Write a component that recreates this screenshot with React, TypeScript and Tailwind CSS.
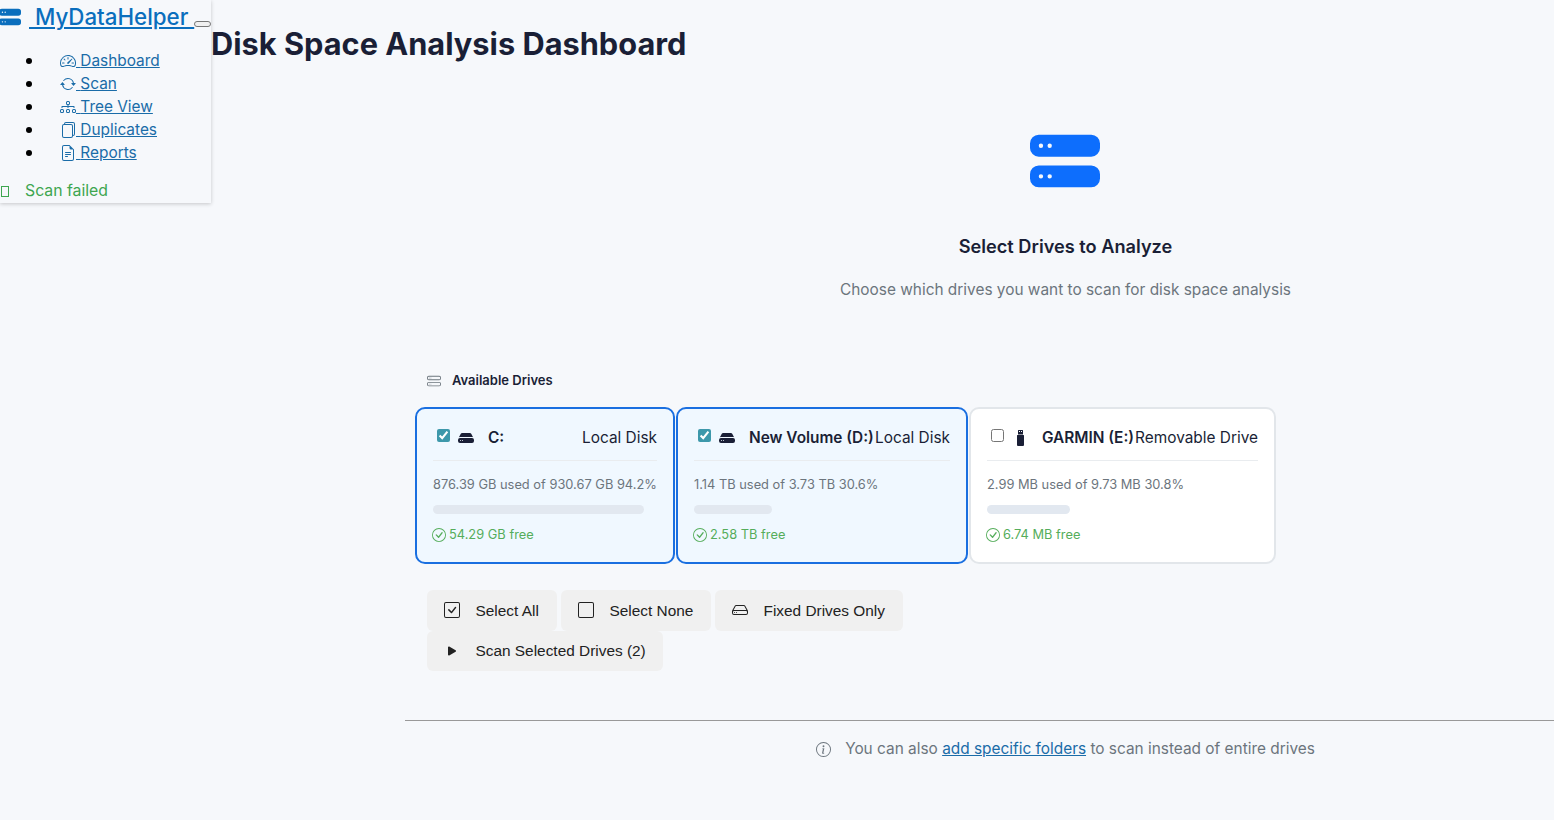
import React from 'react';
import {
  BsSpeedometer2,
  BsArrowRepeat,
  BsDiagram3,
  BsFiles,
  BsFileEarmarkText,
  BsHddStackFill,
  BsHddStack,
  BsHddFill,
  BsUsbDriveFill,
  BsCheckCircle,
  BsCheckSquare,
  BsSquare,
  BsHdd,
  BsPlayFill,
  BsInfoCircle,
} from 'react-icons/bs';

const navItems = [
  { label: 'Dashboard', icon: BsSpeedometer2 },
  { label: 'Scan', icon: BsArrowRepeat },
  { label: 'Tree View', icon: BsDiagram3 },
  { label: 'Duplicates', icon: BsFiles },
  { label: 'Reports', icon: BsFileEarmarkText },
];

const drives = [
  { name: 'C:', type: 'Local Disk', usage: '876.39 GB used of 930.67 GB 94.2%', percent: 94.2, free: '54.29 GB free', selected: true, icon: BsHddFill, width: 'w-[260px]' },
  { name: 'New Volume (D:)', type: 'Local Disk', usage: '1.14 TB used of 3.73 TB 30.6%', percent: 30.6, free: '2.58 TB free', selected: true, icon: BsHddFill, width: 'w-[292px]' },
  { name: 'GARMIN (E:)', type: 'Removable Drive', usage: '2.99 MB used of 9.73 MB 30.8%', percent: 30.8, free: '6.74 MB free', selected: false, icon: BsUsbDriveFill, width: 'w-[307px]' },
];

function Sidebar() {
  return (
    <aside className="w-[211px] h-[203px] shrink-0 bg-[#f6f8fb] shadow-[0_1px_4px_rgba(0,0,0,0.2)] overflow-hidden">
      <div className="flex items-start h-[40px]">
        <a href="#" className="flex items-center text-[22.3px] leading-[33px] font-medium text-[#0a6ebd] whitespace-nowrap">
          <BsHddStackFill className="w-[22px] h-[22px] -ml-px shrink-0" />
          <span className="ml-[8px] underline whitespace-pre"> MyDataHelper </span>
        </a>
        <button className="w-[17px] h-[6px] mt-[21px] border border-[#777] rounded-[3px] bg-[#f0f0f0] shrink-0" />
      </div>
      <ul className="mt-[9px]">
        {navItems.map(({ label, icon: Icon }) => (
          <li key={label} className="flex items-center h-[23px]">
            <span className="w-[6px] h-[6px] ml-[26px] rounded-full bg-black shrink-0" />
            <a href="#" className="flex items-center ml-[28px] text-[15.4px] text-[#1a6ca8] underline whitespace-pre">
              <Icon className="w-[16px] h-[16px] shrink-0" />
              <span> {label}</span>
            </a>
          </li>
        ))}
      </ul>
      <div className="flex items-center mt-[15px] h-[24px] text-[15.8px] text-[#3ea650]">
        <span className="w-[8px] h-[11px] ml-[1px] border border-[#3ea650]" />
        <span className="ml-[16px]">Scan failed</span>
      </div>
    </aside>
  );
}

function DriveCard({ drive }: { drive: (typeof drives)[number] }) {
  const Icon = drive.icon;
  return (
    <div
      className={`${drive.width} h-[157px] shrink-0 rounded-[10px] border-2 p-[16px] ${
        drive.selected ? 'border-[#1a6fe0] bg-[#f0f8ff]' : 'border-[#e2e6ea] bg-white'
      }`}
    >
      <div className="flex items-center justify-between h-[36px] border-b border-[#e9ecef] pb-[9px]">
        <div className="flex items-center">
          <input
            type="checkbox"
            checked={drive.selected}
            readOnly
            className="w-[13px] h-[13px] ml-[4px] mr-[8px] -mt-[5px] accent-[#3d98ab]"
          />
          <Icon className="w-[16px] h-[16px] mr-[14px] text-[#1a1f36]" />
          <span className="text-[15.4px] font-semibold text-[#1a1f36] whitespace-nowrap">{drive.name}</span>
        </div>
        <span className="text-[15.4px] text-[#1a1f36] whitespace-nowrap">{drive.type}</span>
      </div>
      <div className="mt-[14px] text-[12.85px] leading-[20px] text-[#6c757d] whitespace-nowrap">{drive.usage}</div>
      <div className="h-[9px] mt-[10px] rounded-full bg-[#e2e8f0]" style={{ width: `${drive.percent}%` }} />
      <div className="flex items-center mt-[11px] text-[12.85px] leading-[20px] text-[#55ad5b]">
        <BsCheckCircle className="w-[14px] h-[14px] -ml-px mr-[3px]" />
        {drive.free}
      </div>
    </div>
  );
}

function ActionButton({ icon, label, width }: { icon: React.ReactNode; label: string; width: string }) {
  return (
    <button className={`${width} h-[40.5px] flex items-center pl-[16.5px] rounded-[6px] bg-[#f0f0f0] text-[15.4px] text-[#222] font-['Liberation_Sans',sans-serif] whitespace-nowrap`}>
      <span className="w-[32px] flex items-center shrink-0">{icon}</span>
      {label}
    </button>
  );
}

export default function App() {
  return (
    <div className="flex h-screen overflow-hidden bg-[#f6f8fb] font-['Inter',sans-serif] text-[#1a1f36]">
      <Sidebar />
      <main className="flex-1 min-w-0">
        <h1 className="pt-[24px] text-[30.75px] leading-[40px] font-bold whitespace-nowrap">
          Disk Space Analysis Dashboard
        </h1>

        {/* Hero */}
        <div className="pl-[366px] flex flex-col items-center mt-[62px]">
          <BsHddStackFill className="w-[70px] h-[70px] -ml-[2px] text-[#0d6efd]" />
          <h2 className="mt-[36px] text-[18.2px] leading-[28px] font-semibold">Select Drives to Analyze</h2>
          <p className="mt-[16px] text-[15.4px] leading-[28px] text-[#6c757d]">
            Choose which drives you want to scan for disk space analysis
          </p>
        </div>

        {/* Drive list */}
        <div className="pl-[204px] mt-[67px]">
          <div className="flex items-center pl-[12px] h-[20px] text-[13px] font-semibold">
            <BsHddStack className="w-[14px] h-[14px] mr-[11px] text-[#6c757d]" />
            Available Drives
          </div>
          <div className="flex gap-[1px] mt-[16px]">
            {drives.map((drive) => (
              <DriveCard key={drive.name} drive={drive} />
            ))}
          </div>
          <div className="pl-[12px] mt-[26px]">
            <div className="flex gap-[4.5px]">
              <ActionButton icon={<BsCheckSquare className="w-[16px] h-[16px]" />} label="Select All" width="w-[129.5px]" />
              <ActionButton icon={<BsSquare className="w-[16px] h-[16px]" />} label="Select None" width="w-[149.5px]" />
              <ActionButton icon={<BsHdd className="w-[16px] h-[16px]" />} label="Fixed Drives Only" width="w-[188px]" />
            </div>
            <ActionButton icon={<BsPlayFill className="w-[16px] h-[16px]" />} label="Scan Selected Drives (2)" width="w-[236px]" />
          </div>
        </div>

        {/* Footer note */}
        <hr className="ml-[194px] mt-[49px] border-t border-[#999]" />
        <div className="pl-[366px] flex justify-center items-center mt-[16px] text-[15.4px] leading-[24px] text-[#6c757d]">
          <BsInfoCircle className="w-[15px] h-[15px] mr-[14px]" />
          <span>
            You can also{' '}
            <a href="#" className="text-[#1a6ca8] underline">
              add specific folders
            </a>{' '}
            to scan instead of entire drives
          </span>
        </div>
      </main>
    </div>
  );
}
